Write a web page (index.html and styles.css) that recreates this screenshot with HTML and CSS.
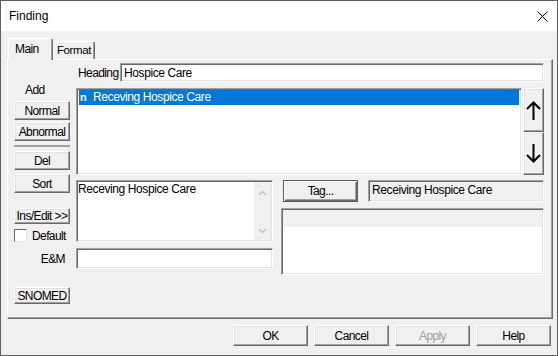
FILE: index.html
```html
<!DOCTYPE html>
<html lang="en">
<head>
    <meta charset="UTF-8">
    <title>Finding</title>
    <link rel="stylesheet" href="styles.css">
</head>
<body>

    <div class="window">

        <!-- Title bar -->
        <div class="titlebar">
            <span class="title">Finding</span>
            <svg class="close" width="11" height="11" viewBox="0 0 11 11">
                <path d="M0.5 0.5 L10.5 10.5 M10.5 0.5 L0.5 10.5" stroke="#000" stroke-width="1" fill="none"/>
            </svg>
        </div>

        <div class="client">

            <!-- Tabs -->
            <div class="tabs">
                <div class="tab active">Main</div>
                <div class="tab">Format</div>
            </div>

            <!-- Main tab page -->
            <div class="panel">

                <div class="side">
                    <div class="add-label">Add</div>
                    <button class="btn side-btn">Normal</button>
                    <button class="btn side-btn gap-2">Abnormal</button>
                    <div class="sep"></div>
                    <button class="btn side-btn gap-4">Del</button>
                    <button class="btn side-btn gap-4">Sort</button>
                    <button class="btn side-btn ins">Ins/Edit &gt;&gt;</button>
                    <div class="check"><span class="box"></span>Default</div>
                    <div class="em-label">E&amp;M</div>
                    <button class="btn side-btn snomed">SNOMED</button>
                </div>

                <div class="main">
                    <div class="heading-row">
                        <span class="heading-label">Heading</span>
                        <div class="sunken heading-input">Hospice Care</div>
                    </div>

                    <div class="list-row">
                        <div class="sunken listbox">
                            <div class="item selected"><span class="n">n</span>Receving Hospice Care</div>
                        </div>
                        <div class="arrows">
                            <button class="btn arrow up">
                                <svg width="15" height="19" viewBox="0 0 15 19">
                                    <path d="M1 8 L7.5 1.5 L14 8 M7.5 1.5 V19" stroke="#000" stroke-width="2" fill="none"/>
                                </svg>
                            </button>
                            <button class="btn arrow down">
                                <svg width="15" height="19" viewBox="0 0 15 19">
                                    <path d="M1 11 L7.5 17.5 L14 11 M7.5 17.5 V0" stroke="#000" stroke-width="2" fill="none"/>
                                </svg>
                            </button>
                        </div>
                    </div>

                    <div class="lower">
                        <div class="col-a">
                            <div class="sunken memo">
                                <div class="memo-text">Receving Hospice Care</div>
                                <div class="vscroll">
                                    <svg width="9" height="6" viewBox="0 0 9 6"><path d="M1 5 L4.5 1.5 L8 5" stroke="#c4c4c4" stroke-width="1.5" fill="none"/></svg>
                                    <svg width="9" height="6" viewBox="0 0 9 6"><path d="M1 1 L4.5 4.5 L8 1" stroke="#c4c4c4" stroke-width="1.5" fill="none"/></svg>
                                </div>
                            </div>
                            <div class="sunken em-input"></div>
                        </div>
                        <div class="col-b">
                            <div class="tag-row">
                                <button class="btn tag">Tag...</button>
                                <div class="sunken readonly">Receiving Hospice Care</div>
                            </div>
                            <div class="sunken grid-box">
                                <div class="grid-head"></div>
                            </div>
                        </div>
                    </div>
                </div>

            </div>

            <!-- Dialog buttons -->
            <div class="footer">
                <button class="btn dlg-btn">OK</button>
                <button class="btn dlg-btn">Cancel</button>
                <button class="btn dlg-btn disabled">Apply</button>
                <button class="btn dlg-btn">Help</button>
            </div>

        </div>
    </div>

</body>
</html>
```

FILE: styles.css
```css
/* Reset */
* {
    margin: 0;
    padding: 0;
    box-sizing: border-box;
}

body {
    background: #f0f0f0;
    font-family: 'Liberation Sans', Arial, sans-serif;
    font-size: 11px;
    letter-spacing: -0.2px;
    color: #000;
}

/* Window frame */
.window {
    width: 558px;
    height: 356px;
    border: 1px solid #5f5f5f;
    background: #f0f0f0;
    overflow: hidden;
}

.titlebar {
    height: 30px;
    background: #fff;
    display: flex;
    align-items: center;
    padding: 0 9px 0 8px;
}

.title {
    font-size: 12px;
    letter-spacing: 0;
}

.close {
    margin-left: auto;
    display: block;
}

.client {
    height: 324px;
    padding: 7px 0 0 6px;
}

/* Tabs */
.tabs {
    display: flex;
    align-items: flex-end;
    height: 21px;
    margin-left: 1px;
    position: relative;
    z-index: 2;
}

.tab {
    height: 18px;
    width: 42px;
    background: #f0f0f0;
    border-top: 1px solid #fff;
    border-left: 1px solid #fff;
    border-right: 1px solid #696969;
    box-shadow: inset -1px 0 #a0a0a0;
    border-radius: 2px 2px 0 0;
    padding: 2px 0 0 3px;
    font-size: 11.5px;
    letter-spacing: -0.4px;
    white-space: nowrap;
}

.tab.active {
    width: 45px;
    height: 22px;
    margin-bottom: -1px;
    padding: 3px 0 0 6px;
    font-size: 12px;
    letter-spacing: -0.6px;
}

/* Tab page */
.panel {
    width: 546px;
    height: 260px;
    border: 1px solid;
    border-color: #fff #696969 #696969 #fff;
    box-shadow: inset -1px -1px #a0a0a0;
    display: flex;
    padding: 3px 0 0 6px;
}

/* Generic 3D controls */
.btn {
    display: flex;
    align-items: center;
    justify-content: center;
    background: #f0f0f0;
    border: 1px solid;
    border-color: #fff #696969 #696969 #fff;
    box-shadow: inset -1px -1px #a0a0a0, inset 1px 1px #e3e3e3;
    font-family: 'Liberation Sans', Arial, sans-serif;
    font-size: 12px;
    letter-spacing: -0.6px;
    color: #000;
}

.sunken {
    background: #fff;
    border: 1px solid;
    border-color: #a0a0a0 #fff #fff #a0a0a0;
    box-shadow: inset 1px 1px #696969, inset -1px -1px #e3e3e3;
}

/* Left button column */
.side {
    width: 56px;
    display: flex;
    flex-direction: column;
}

.add-label {
    margin-top: 20px;
    height: 15px;
    line-height: 15px;
    padding-left: 11px;
    font-size: 12px;
    letter-spacing: -0.6px;
}

.side-btn {
    height: 19px;
    margin-top: 3px;
}

.gap-2 {
    margin-top: 2px;
}

.gap-4 {
    margin-top: 4px;
}

.sep {
    height: 2px;
    margin-top: 4px;
    background: #a0a0a0;
}

.side-btn.ins {
    height: 16px;
    margin-top: 15px;
}

.check {
    display: flex;
    align-items: center;
    height: 13px;
    margin-top: 5px;
    font-size: 12px;
    letter-spacing: -0.6px;
}

.check .box {
    width: 13px;
    height: 13px;
    background: #fff;
    border: 1px solid;
    border-color: #696969 #e3e3e3 #e3e3e3 #696969;
    margin-right: 5px;
}

.em-label {
    margin-top: 10px;
    height: 15px;
    line-height: 15px;
    text-align: right;
    padding-right: 5px;
    font-size: 12px;
    letter-spacing: -0.6px;
}

.side-btn.snomed {
    height: 17px;
    margin-top: 20px;
}

/* Right area */
.main {
    width: 468px;
    margin-left: 6px;
}

.heading-row {
    display: flex;
    align-items: center;
    height: 19px;
}

.heading-label {
    width: 44px;
    padding-left: 2px;
    font-size: 12px;
    letter-spacing: -0.6px;
}

.heading-input {
    width: 424px;
    height: 19px;
    padding: 2px 0 0 3px;
    font-size: 12px;
    letter-spacing: -0.4px;
}

.list-row {
    display: flex;
    margin-top: 6px;
    height: 87px;
}

.listbox {
    width: 446px;
    padding: 1px 2px 2px 2px;
}

.item {
    height: 15px;
    line-height: 15px;
    font-size: 12px;
    letter-spacing: -0.4px;
    white-space: nowrap;
}

.item.selected {
    background: #0078d7;
    color: #fff;
}

.item .n {
    display: inline-block;
    width: 14px;
    padding-left: 1px;
    font-weight: bold;
    font-size: 11px;
    letter-spacing: 0;
}

.arrows {
    margin-left: 1px;
    width: 21px;
    display: flex;
    flex-direction: column;
}

.arrow {
    width: 21px;
    height: 44px;
}

.arrow.down {
    height: 43px;
}

.lower {
    display: flex;
    margin-top: 5px;
}

.col-a {
    width: 197px;
}

.memo {
    height: 62px;
    display: flex;
}

.memo-text {
    flex: 1;
    padding: 1px 0 0 1px;
    font-size: 12px;
    letter-spacing: -0.4px;
}

.vscroll {
    width: 17px;
    background: #f0f0f0;
    display: flex;
    flex-direction: column;
    justify-content: space-between;
    align-items: center;
    padding: 8px 0 6px;
    margin: 1px 1px 1px 0;
}

.em-input {
    height: 21px;
    margin-top: 6px;
}

.col-b {
    width: 263px;
    margin-left: 8px;
}

.tag-row {
    display: flex;
    height: 22px;
}

.btn.tag {
    width: 75px;
    margin-left: 2px;
    border: 1px solid #5a5a5a;
    box-shadow: inset 1px 1px #fff, inset -1px -1px #696969, inset -2px -2px #a0a0a0;
}

.readonly {
    width: 176px;
    margin-left: 10px;
    background: #f0f0f0;
    padding: 2px 0 0 3px;
    font-size: 12px;
    letter-spacing: -0.4px;
}

.grid-box {
    height: 67px;
    margin-top: 6px;
    padding: 1px 1px 0 1px;
}

.grid-head {
    height: 17px;
    background: #f0f0f0;
}

/* Dialog buttons */
.footer {
    display: flex;
    justify-content: flex-end;
    gap: 6px;
    margin: 6px 6px 0 0;
}

.dlg-btn {
    width: 75px;
    height: 21px;
}

.dlg-btn.disabled {
    color: #a0a0a0;
}
```
